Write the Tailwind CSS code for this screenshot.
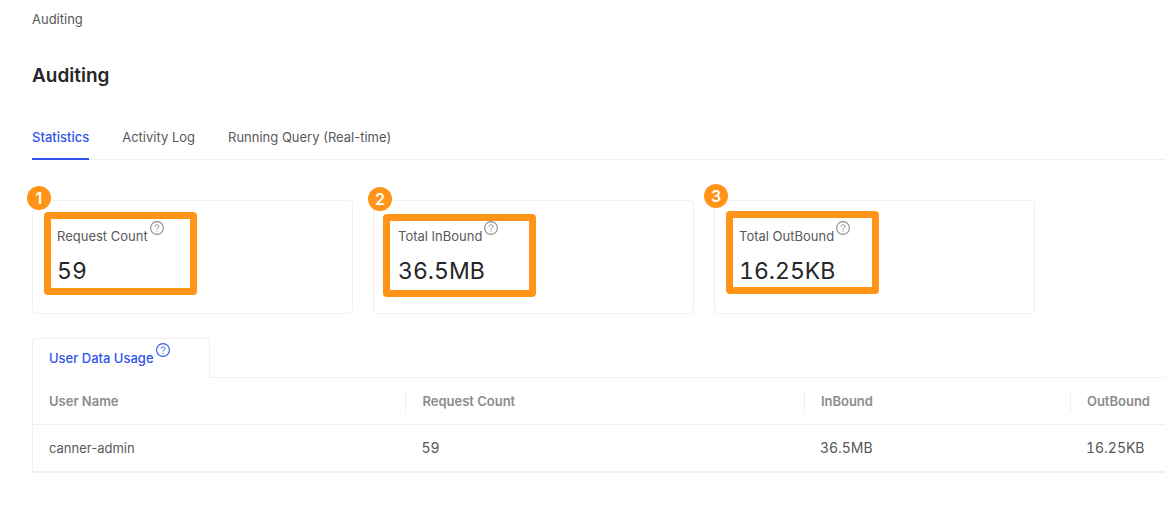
<!DOCTYPE html>
<html lang="en">
<head>
  <meta charset="UTF-8" />
  <meta name="viewport" content="width=device-width, initial-scale=1" />
  <title>Auditing</title>
  <script src="https://cdn.jsdelivr.net/npm/@tailwindcss/browser@4"></script>
</head>
<body class="bg-white font-['Inter',sans-serif] text-[13px] leading-[22px] text-[#595959] overflow-x-hidden">
  <!-- Question mark icon, shared by the cards and the table tab -->
  <svg class="hidden">
    <symbol id="help" viewBox="0 0 14 14" fill="none" stroke="currentColor">
      <circle cx="7" cy="7" r="6.4" stroke-width="1.1" />
      <path d="M5.1 5.7c0-1.1.8-1.9 1.9-1.9s1.9.7 1.9 1.7c0 .8-.5 1.2-1.1 1.5-.5.3-.8.6-.8 1.3v.2" stroke-width="1" />
      <circle cx="7" cy="10.1" r=".6" fill="currentColor" stroke="none" />
    </symbol>
  </svg>

  <header class="pl-8 pt-2">
    <nav aria-label="Breadcrumb"><a href="#">Auditing</a></nav>
    <h1 class="mt-7 text-[19px] leading-9 font-semibold text-[#262626]">Auditing</h1>
  </header>

  <main class="pl-8 pt-5">
    <nav class="flex gap-[33px] pt-3 border-b border-[#f0f0f0]" aria-label="Auditing views">
      <a href="#" class="-mb-px pb-[10px] border-b-2 border-[#2f54eb] font-medium text-[#2f54eb]" aria-current="page">Statistics</a>
      <a href="#">Activity Log</a>
      <a href="#">Running Query (Real-time)</a>
    </nav>

    <section class="grid grid-cols-3 gap-5 mt-10 mr-[130px]">
      <div class="relative px-6 pt-6 pb-[22px] border border-[#f0f0f0] rounded-sm">
        <div class="flex gap-0.5 mb-1">Request Count<svg class="size-[14px] -mt-1 text-[#8c8c8c]"><use href="#help" /></svg></div>
        <div class="text-[23px] leading-10 tabular-nums text-[#262626]">59</div>
        <div class="absolute left-[11px] top-[11px] w-[153px] h-[83px] border-7 border-[#ff9419] rounded-sm"></div>
        <span class="absolute -left-[6px] -top-[15px] size-6 rounded-full bg-[#ff9419] text-center text-base leading-6 font-semibold text-white">1</span>
      </div>
      <div class="relative px-6 pt-6 pb-[22px] border border-[#f0f0f0] rounded-sm">
        <div class="flex gap-0.5 mb-1">Total InBound<svg class="size-[14px] -mt-1 text-[#8c8c8c]"><use href="#help" /></svg></div>
        <div class="text-[23px] leading-10 tabular-nums text-[#262626]">36.5MB</div>
        <div class="absolute left-[9px] top-[13px] w-[153px] h-[83px] border-7 border-[#ff9419] rounded-sm"></div>
        <span class="absolute -left-[6px] -top-[14px] size-6 rounded-full bg-[#ff9419] text-center text-base leading-6 font-semibold text-white">2</span>
      </div>
      <div class="relative px-6 pt-6 pb-[22px] border border-[#f0f0f0] rounded-sm">
        <div class="flex gap-0.5 mb-1">Total OutBound<svg class="size-[14px] -mt-1 text-[#8c8c8c]"><use href="#help" /></svg></div>
        <div class="text-[23px] leading-10 tabular-nums text-[#262626]">16.25KB</div>
        <div class="absolute left-[11px] top-[10px] w-[153px] h-[83px] border-7 border-[#ff9419] rounded-sm"></div>
        <span class="absolute -left-[11px] -top-[17px] size-6 rounded-full bg-[#ff9419] text-center text-base leading-6 font-semibold text-white">3</span>
      </div>
    </section>

    <section class="mt-6">
      <div class="flex">
        <button type="button" class="flex gap-0.5 w-[178px] h-10 pl-4 pt-2 border border-b-0 border-[#f0f0f0] rounded-t-sm font-medium text-[#2f54eb]">User Data Usage<svg class="size-[14px] -mt-1"><use href="#help" /></svg></button>
        <div class="flex-1 border-b border-[#f0f0f0]"></div>
      </div>
      <table class="w-full table-fixed border-l border-b-2 border-[#f0f0f0] border-separate border-spacing-0 text-left">
        <colgroup>
          <col class="w-[32.9%]" />
          <col class="w-[35.2%]" />
          <col class="w-[23.5%]" />
          <col />
        </colgroup>
        <thead>
          <tr class="text-[#8c8c8c]">
            <th class="py-3 pl-4 border-b border-[#f0f0f0] font-semibold">User Name</th>
            <th class="py-3 border-b border-[#f0f0f0] font-semibold"><div class="pl-4 border-l border-[#f0f0f0]">Request Count</div></th>
            <th class="py-3 border-b border-[#f0f0f0] font-semibold"><div class="pl-4 border-l border-[#f0f0f0]">InBound</div></th>
            <th class="py-3 border-b border-[#f0f0f0] font-semibold"><div class="pl-4 border-l border-[#f0f0f0]">OutBound</div></th>
          </tr>
        </thead>
        <tbody>
          <tr>
            <td class="py-3 pl-4">canner-admin</td>
            <td class="py-3 pl-4 text-sm leading-[22px] tabular-nums">59</td>
            <td class="py-3 pl-4 text-sm leading-[22px] tabular-nums">36.5MB</td>
            <td class="py-3 pl-4 text-sm leading-[22px] tabular-nums">16.25KB</td>
          </tr>
        </tbody>
      </table>
    </section>
  </main>
</body>
</html>
